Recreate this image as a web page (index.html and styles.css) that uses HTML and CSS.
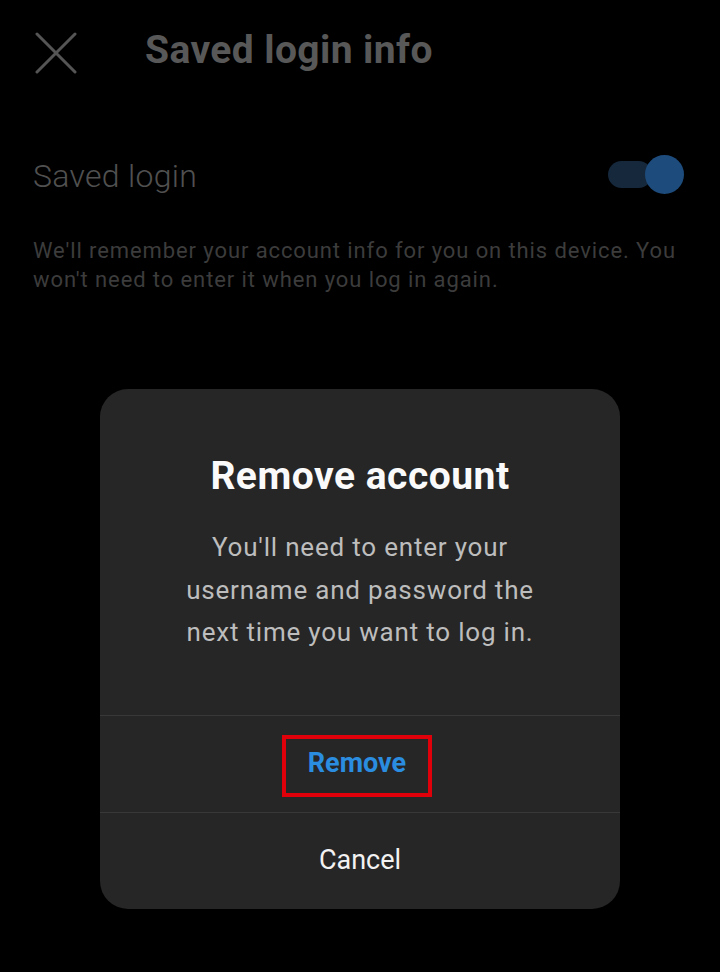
FILE: index.html
```html
<!DOCTYPE html>
<html lang="en">
<head>
<meta charset="utf-8">
<title>Saved login info</title>
<link rel="stylesheet" href="styles.css">
</head>
<body>
<div class="page">
  <header class="topbar">
    <svg class="close-icon" width="42" height="42" viewBox="0 0 42 42" aria-hidden="true">
      <path d="M2 2 L40 40 M40 2 L2 40" stroke="#555" stroke-width="3" stroke-linecap="round" fill="none"/>
    </svg>
    <h1 class="title">Saved login info</h1>
  </header>

  <section class="setting">
    <div class="setting-row">
      <span class="setting-label">Saved login</span>
      <span class="toggle"><span class="toggle-knob"></span></span>
    </div>
    <p class="setting-desc">We'll remember your account info for you on this device. You won't need to enter it when you log in again.</p>
  </section>
</div>

<div class="overlay">
  <div class="dialog">
    <h2 class="dialog-title">Remove account</h2>
    <p class="dialog-body">You'll need to enter your username and password the next time you want to log in.</p>
    <div class="dialog-action action-remove"><span class="highlight">Remove</span></div>
    <div class="dialog-action action-cancel">Cancel</div>
  </div>
</div>
</body>
</html>
```

FILE: styles.css
```css
html, body {
  margin: 0;
  padding: 0;
  background: #000;
  width: 720px;
  height: 972px;
  overflow: hidden;
  font-family: Roboto, "Noto Sans", sans-serif;
}

.page {
  display: flex;
  flex-direction: column;
}

.topbar {
  height: 100px;
  display: flex;
  align-items: center;
}

.close-icon {
  margin-left: 35px;
  margin-top: 6px;
  flex: none;
}

.title {
  margin: 0 0 0 68px;
  font-size: 39px;
  font-weight: 700;
  color: #585858;
  letter-spacing: 0.4px;
}

.setting {
  padding: 38px 36px 0 33px;
}

.setting-row {
  display: flex;
  align-items: center;
  justify-content: space-between;
  height: 76px;
}

.setting-label {
  font-size: 32px;
  font-weight: 300;
  color: #505050;
  letter-spacing: 0.3px;
}

.toggle {
  position: relative;
  width: 44px;
  height: 27px;
  border-radius: 14px;
  background: #15283c;
  margin-right: 32px;
  margin-top: -4px;
}

.toggle-knob {
  position: absolute;
  right: -32px;
  top: -6px;
  width: 39px;
  height: 39px;
  border-radius: 50%;
  background: #1d4b7c;
}

.setting-desc {
  margin: 22px 0 0 0;
  font-size: 22px;
  line-height: 29px;
  color: #3c3c3c;
  letter-spacing: 0.9px;
}

.overlay {
  position: fixed;
  inset: 0;
  display: flex;
  justify-content: center;
  align-items: flex-start;
  padding-top: 389px;
}

.dialog {
  width: 520px;
  background: #262626;
  border-radius: 28px;
  display: flex;
  flex-direction: column;
  align-items: stretch;
  text-align: center;
}

.dialog-title {
  margin: 0;
  padding-top: 65px;
  font-size: 39px;
  line-height: 44px;
  font-weight: 700;
  color: #fafafa;
  letter-spacing: 0.5px;
}

.dialog-body {
  margin: 28px 0 0 0;
  padding: 0 70px 61px;
  font-size: 26px;
  line-height: 42.5px;
  color: #bdbdbd;
  letter-spacing: 0.8px;
}

.dialog-action {
  height: 96px;
  border-top: 1px solid #383838;
  display: flex;
  align-items: center;
  justify-content: center;
  font-size: 27px;
}

.action-remove {
  color: #2b8de0;
  font-weight: 700;
}

.highlight {
  width: 142px;
  border: 4px solid #e0000a;
  display: flex;
  align-items: center;
  justify-content: center;
  padding-bottom: 6px;
  box-sizing: content-box;
  height: 48px;
  margin-top: 4px;
  margin-right: 6px;
}

.action-cancel {
  color: #f2f2f2;
  height: 94px;
  padding-bottom: 2px;
}
```
